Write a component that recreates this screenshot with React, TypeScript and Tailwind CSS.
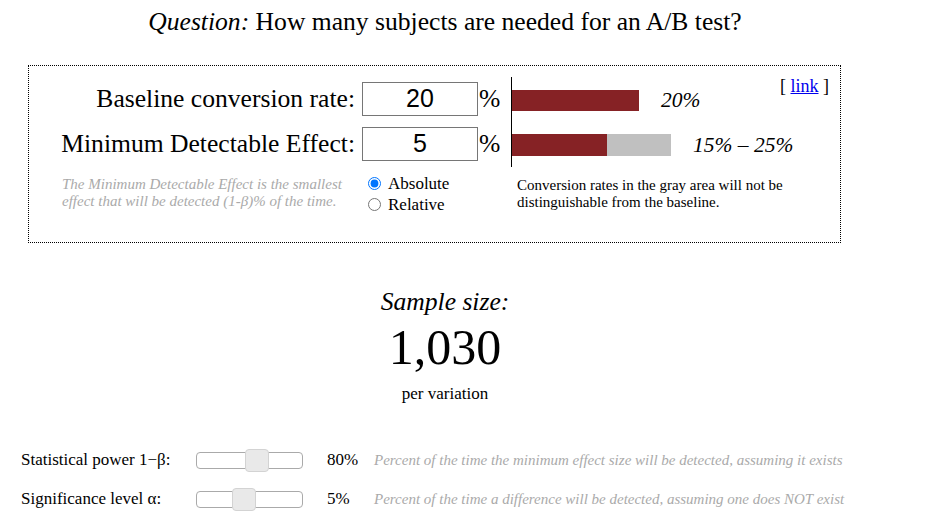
import React from 'react';

const serif = "font-['Liberation_Serif',_'Times_New_Roman',_serif]";

function Slider({ thumbLeft }: { thumbLeft: number }) {
  return (
    <div className="relative w-[107px] h-[17px] border border-[#aaaaaa] rounded-[4px] bg-white">
      <div
        className="absolute top-[-4px] w-[24px] h-[23px] rounded-[4px] border border-[#d3d3d3] bg-[#e9e9e9]"
        style={{ left: thumbLeft }}
      />
    </div>
  );
}

function ParamRow({ label, value, thumbLeft, note }: { label: string; value: string; thumbLeft: number; note: string }) {
  return (
    <div className="flex items-center h-[24px]">
      <div className="w-[196px] pl-[21px] text-[17px]">{label}</div>
      <Slider thumbLeft={thumbLeft} />
      <div className="w-[71px] pl-[24px] text-[17px]">{value}</div>
      <div className="italic text-[15px] text-[#aaaaaa] whitespace-nowrap">{note}</div>
    </div>
  );
}

export default function App() {
  return (
    <div className={`${serif} w-[947px] h-[530px] bg-white text-black overflow-hidden`}>
      <div className="w-[890px]">
        <h1 className="text-center text-[25.6px] leading-[28px] pt-[8px]">
          <span className="italic">Question:</span> How many subjects are needed for an A/B test?
        </h1>

        <div className="relative ml-[28px] mt-[29px] w-[813px] h-[178px] border border-dotted border-black flex">
          <div className="w-[478px] pt-[16px]">
            <div className="flex items-center h-[34px]">
              <label className="w-[326px] text-right text-[25.6px]">Baseline conversion rate:</label>
              <input
                type="text"
                defaultValue="20"
                className="ml-[7px] w-[116px] h-[34px] border border-[#767676] text-center text-[25px] font-['Liberation_Sans',_Arial,_sans-serif] outline-none"
              />
              <span className="ml-[1px] text-[25.6px]">%</span>
            </div>
            <div className="flex items-center h-[34px] mt-[11px]">
              <label className="w-[326px] text-right text-[25.6px]">Minimum Detectable Effect:</label>
              <input
                type="text"
                defaultValue="5"
                className="ml-[7px] w-[116px] h-[34px] border border-[#767676] text-center text-[25px] font-['Liberation_Sans',_Arial,_sans-serif] outline-none"
              />
              <span className="ml-[1px] text-[25.6px]">%</span>
            </div>
            <div className="flex mt-[12px]">
              <p className="ml-[33px] w-[300px] italic text-[15px] leading-[17px] text-[#aaaaaa] pt-[3px]">
                The Minimum Detectable Effect is the smallest effect that will be detected (1-β)% of the time.
              </p>
              <div className="ml-[6px] text-[17px] leading-[21px]">
                <label className="flex items-center">
                  <input type="radio" name="mde" defaultChecked className="w-[13px] h-[13px] m-0 mr-[7px] accent-[#0075ff]" />
                  Absolute
                </label>
                <label className="flex items-center">
                  <input type="radio" name="mde" className="w-[13px] h-[13px] m-0 mr-[7px]" />
                  Relative
                </label>
              </div>
            </div>
          </div>

          <div className="pl-[4px] pt-[11px]">
            <div className="flex border-l border-black h-[90px] flex-col">
              <div className="flex items-center mt-[13px] h-[21px]">
                <div className="w-[127px] h-[21px] bg-[#862225]" />
                <span className="ml-[22px] italic text-[21.5px]">20%</span>
              </div>
              <div className="flex items-center mt-[23px] h-[22px]">
                <div className="w-[95px] h-[22px] bg-[#862225]" />
                <div className="w-[64px] h-[22px] bg-[#c0c0c0]" />
                <span className="ml-[22px] italic text-[21.5px]">15% – 25%</span>
              </div>
            </div>
            <p className="ml-[6px] mt-[10px] w-[300px] text-[15px] leading-[17px]">
              Conversion rates in the gray area will not be distinguishable from the baseline.
            </p>
          </div>

          <div className="absolute top-[7px] right-[11px] text-[18px]">
            [ <a href="#" className="text-[#0000ee] underline">link</a> ]
          </div>
        </div>

        <div className="text-center mt-[45px]">
          <div className="italic text-[25.6px] leading-[28px]">Sample size:</div>
          <div className="text-[50px] leading-[58px] mt-[2px]">1,030</div>
          <div className="text-[17px] leading-[20px] mt-[8px]">per variation</div>
        </div>
      </div>

      <div className="mt-[44px] flex flex-col gap-[15px]">
        <ParamRow
          label="Statistical power 1−β:"
          value="80%"
          thumbLeft={48}
          note="Percent of the time the minimum effect size will be detected, assuming it exists"
        />
        <ParamRow
          label="Significance level α:"
          value="5%"
          thumbLeft={35}
          note="Percent of the time a difference will be detected, assuming one does NOT exist"
        />
      </div>
    </div>
  );
}
